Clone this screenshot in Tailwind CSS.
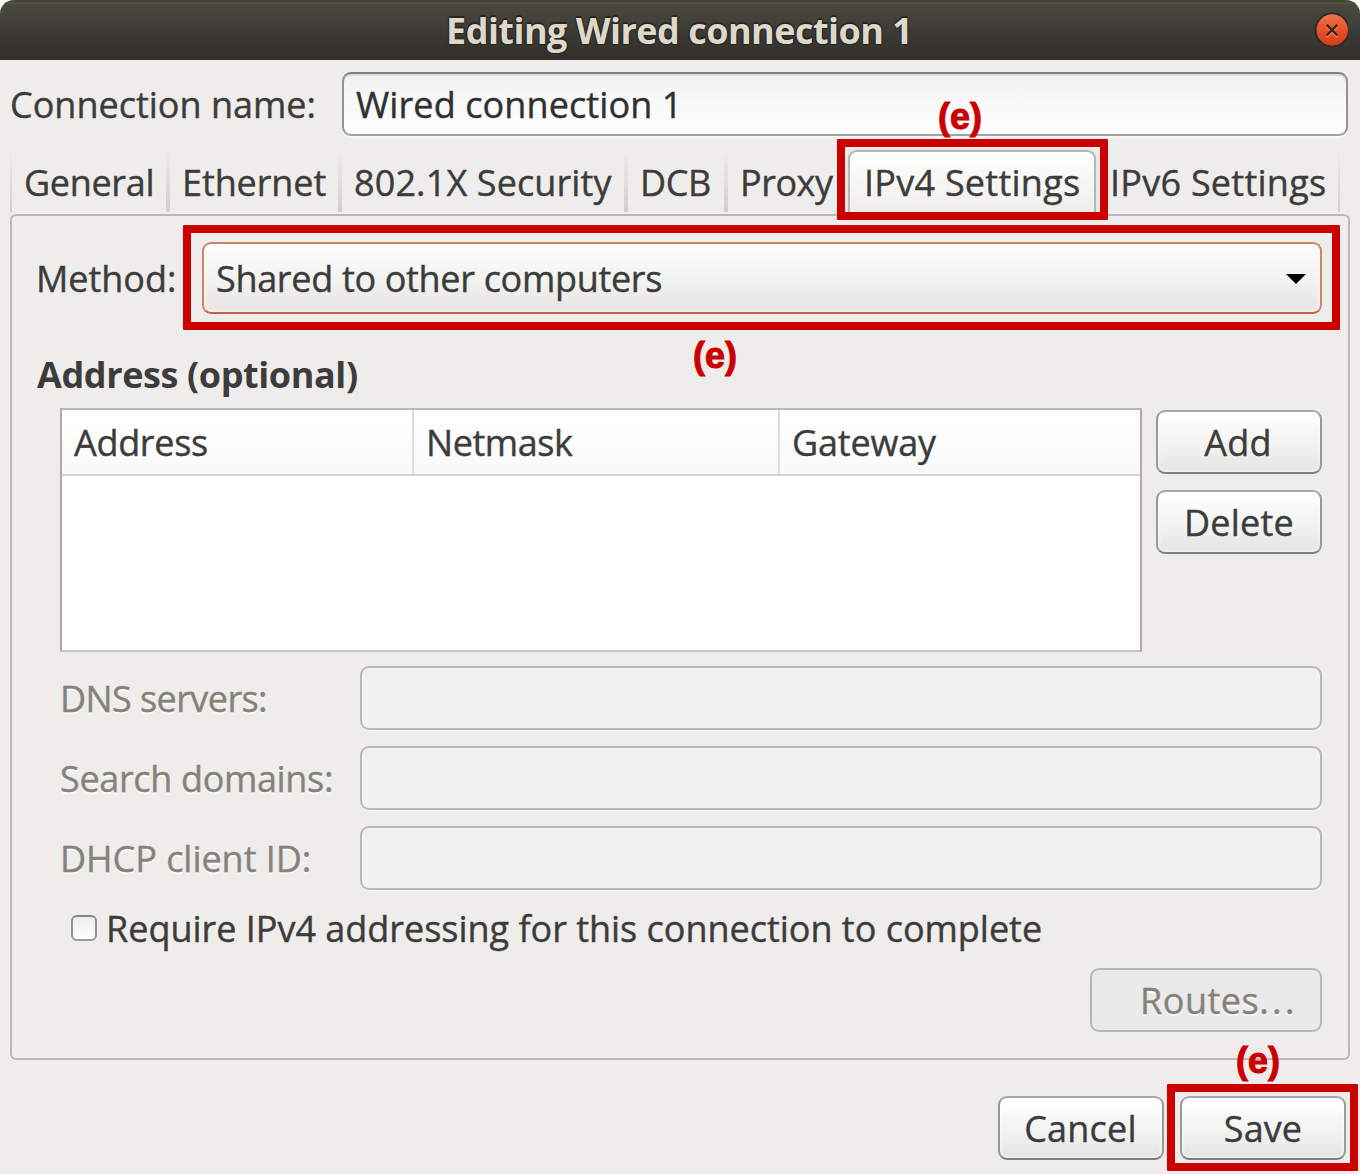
<!DOCTYPE html>
<html lang="en">
<head>
<meta charset="utf-8">
<title>Editing Wired connection 1</title>
<script src="https://cdn.jsdelivr.net/npm/@tailwindcss/browser@4"></script>
</head>
<body class="bg-white">
<div class="relative flex h-[1174px] w-[1360px] flex-col overflow-hidden rounded-t-[14px] bg-[#eeedeb] font-['Open_Sans',sans-serif] text-[36px] leading-[66px] whitespace-nowrap text-[#3c3c3c] [-webkit-text-stroke:0.4px_currentColor]">

  <!-- Title bar -->
  <header class="flex h-[60px] shrink-0 items-center justify-between border-t-2 border-[#454439] bg-linear-to-b from-[#4b4a40] via-[#3c3b36] to-[#302f2b] pr-3 pb-0.5 pl-[446px] shadow-[inset_0_2px_0_#525146]">
    <h1 class="pt-0.5 font-bold leading-[56px] tracking-[-0.52px] text-[#dfd8c9] [-webkit-text-stroke:0] [text-shadow:0_-2px_0_#262623,0_1px_1px_#262623,1px_0_1px_#262623,-1px_0_1px_#262623]">Editing Wired connection 1</h1>
    <button aria-label="Close" class="flex size-9 items-center justify-center">
      <svg class="size-9" viewBox="0 0 36 36">
        <defs><linearGradient id="close" x1="0" y1="0" x2="0" y2="1"><stop offset="0" stop-color="#f0764f"/><stop offset="0.5" stop-color="#e8512b"/><stop offset="1" stop-color="#d83c12"/></linearGradient></defs>
        <circle cx="20" cy="18" r="16.6" fill="url(#close)" stroke="#2a2925" stroke-width="1.8" transform="translate(0.2 0)"/>
        <path d="M14.7 14.7l10.6 10.6M25.3 14.7L14.7 25.3" stroke="#f4764f" stroke-width="2" fill="none"/>
        <path d="M14.7 12.7l10.6 10.6M25.3 12.7L14.7 23.3" stroke="#32280f" stroke-width="2.3" fill="none"/>
      </svg>
    </button>
  </header>

  <!-- Connection name -->
  <div class="mt-3 flex h-16 shrink-0 pr-3 pl-2.5">
    <label class="w-[332px]">Connection name:</label>
    <div class="flex h-16 flex-1 rounded-[9px] border-2 border-x-[#929292] border-t-[#7f7f7f] border-b-[#a1a1a1] bg-linear-to-b from-[#f2f2f2] to-white pl-3 leading-[62px] tracking-[0.1px] text-[#303030] shadow-[0_2px_0_#f7f7f6,inset_0_2px_0_#dcdcdc]">Wired connection 1</div>
  </div>

  <!-- Tabs -->
  <nav class="mt-[14px] flex h-16 shrink-0 pl-2.5">
    <i class="h-[62px] w-0.5 bg-linear-to-b from-transparent to-[#d0cfcd]"></i>
    <div class="w-[154px] pl-3 tracking-[-0.33px]">General</div>
    <i class="h-[62px] w-1 bg-linear-to-b from-transparent to-[#d0cfcd]"></i>
    <div class="w-[168px] pl-3 tracking-[-0.1px]">Ethernet</div>
    <i class="h-[62px] w-1 bg-linear-to-b from-transparent to-[#d0cfcd]"></i>
    <div class="w-[282px] pl-3 tracking-[0.12px]">802.1X Security</div>
    <i class="h-[62px] w-1 bg-linear-to-b from-transparent to-[#d0cfcd]"></i>
    <div class="w-24 pl-3 tracking-[-0.4px]">DCB</div>
    <i class="h-[62px] w-1 bg-linear-to-b from-transparent to-[#d0cfcd]"></i>
    <div class="w-[120px] pl-3 tracking-[-0.47px]">Proxy</div>
    <div class="w-[248px] rounded-t-[9px] border-2 border-b-0 border-[#b9b7b2] bg-linear-to-b from-white to-[#eeedeb] pl-[14px] leading-[62px] tracking-[0.25px] shadow-[0_0_3px_#d8d7d5]">IPv4 Settings</div>
    <div class="w-[242px] pl-[14px] tracking-[0.25px]">IPv6 Settings</div>
    <i class="h-[62px] w-0.5 bg-linear-to-b from-transparent to-[#d0cfcd]"></i>
  </nav>

  <!-- IPv4 page -->
  <main class="mx-2.5 flex h-[846px] shrink-0 flex-col rounded-md border-2 border-[#bab9b4] pr-[26px]">
    <div class="mt-[26px] flex h-[72px] shrink-0 pl-6 leading-[74px]">
      <label class="w-[166px] tracking-[-0.05px]">Method:</label>
      <div class="flex h-[72px] flex-1 justify-between rounded-[9px] border-2 border-[#d0836b] border-b-[#c7623f] bg-linear-to-b from-[#fdfdfd] via-[#f3f3f2] to-[#e6e5e3] pr-[14px] pl-3 leading-[70px] tracking-[-0.32px] shadow-[inset_0_0_4px_#ffffff,0_0_3px_#f7ece8]">
        <span>Shared to other computers</span>
        <svg class="mt-[30px] h-2.5 w-5" viewBox="0 0 20 10"><path d="M0 0h20L10 10z" fill="#000"/></svg>
      </div>
    </div>
    <h2 class="mt-7 h-16 shrink-0 pl-[25px] font-bold tracking-[-0.4px] [-webkit-text-stroke:0]">Address (optional)</h2>

    <div class="mt-0.5 flex h-[244px] shrink-0 pl-12">
      <div class="w-[1082px] border-2 border-x-[#aeaaa7] border-t-[#b9b7b5] border-b-[#c9c5c2] bg-white">
        <div class="flex h-[66px] border-b-2 border-[#d4d1d0] bg-linear-to-b from-white to-[#f9f9f9]">
          <div class="w-[352px] border-r-2 border-[#dddcdb] pl-3 tracking-[-0.32px]">Address</div>
          <div class="w-[366px] border-r-2 border-[#dddcdb] pl-3 tracking-[-0.44px]">Netmask</div>
          <div class="pl-3 tracking-[-0.19px]">Gateway</div>
        </div>
      </div>
      <div class="mt-0.5 ml-[14px] flex flex-1 flex-col gap-4 leading-[58px]">
        <button class="h-16 rounded-[9px] border-2 border-x-[#999] border-t-[#a6a6a6] border-b-[#7f7f7f] bg-linear-to-b from-white via-[#f4f4f3] to-[#e5e4e2] pt-0.5 pr-0.5 tracking-[0.3px] shadow-[inset_0_0_4px_#fff]">Add</button>
        <button class="h-16 rounded-[9px] border-2 border-x-[#999] border-t-[#a6a6a6] border-b-[#7f7f7f] bg-linear-to-b from-white via-[#f4f4f3] to-[#e5e4e2] pt-0.5 tracking-[0.2px] shadow-[inset_0_0_4px_#fff]">Delete</button>
      </div>
    </div>

    <div class="mt-[14px] grid shrink-0 grid-cols-[300px_1fr] gap-y-4 pl-12 text-[#86827a] [text-shadow:0_2px_0_#fafafa]">
      <label class="h-16 tracking-[-0.58px]">DNS servers:</label>
      <div class="h-16 rounded-[9px] border-2 border-[#b9b8b7] bg-[#f1f1f1] shadow-[0_2px_0_#f4f3f2]"></div>
      <label class="h-16 tracking-[-0.34px]">Search domains:</label>
      <div class="h-16 rounded-[9px] border-2 border-[#b9b8b7] bg-[#f1f1f1] shadow-[0_2px_0_#f4f3f2]"></div>
      <label class="h-16 tracking-[-0.04px]">DHCP client ID:</label>
      <div class="h-16 rounded-[9px] border-2 border-[#b9b8b7] bg-[#f1f1f1] shadow-[0_2px_0_#f4f3f2]"></div>
    </div>

    <label class="mt-1.5 flex h-16 shrink-0 items-center pl-[59px]">
      <span class="mr-[9px] size-[26px] rounded-md border-2 border-x-[#929292] border-t-[#858585] border-b-[#9a9a9a] bg-linear-to-b from-[#ededed] to-white"></span>
      <span class="pt-0.5 tracking-[-0.02px]">Require IPv4 addressing for this connection to complete</span>
    </label>

    <button class="mt-2 h-16 w-[232px] shrink-0 self-end rounded-[9px] border-2 border-[#b9b8b7] bg-[#eaeaea] pt-0.5 pl-12 text-left leading-[58px] tracking-[0.5px] text-[#86827a] [text-shadow:0_2px_0_#fafafa]">Routes<span class="tracking-[3.5px]">...</span></button>
  </main>

  <!-- Dialog actions -->
  <footer class="mt-9 flex h-16 shrink-0 justify-end gap-4 pr-[14px] leading-[58px]">
    <button class="w-[166px] rounded-[9px] border-2 border-x-[#999] border-t-[#a6a6a6] border-b-[#7f7f7f] bg-linear-to-b from-white via-[#f4f4f3] to-[#e5e4e2] pt-0.5 pr-px tracking-[0.2px] shadow-[inset_0_0_4px_#fff]">Cancel</button>
    <button class="w-[166px] rounded-[9px] border-2 border-x-[#999] border-t-[#a6a6a6] border-b-[#7f7f7f] bg-linear-to-b from-white via-[#f4f4f3] to-[#e5e4e2] pt-0.5 tracking-[0.09px] shadow-[inset_0_0_4px_#fff]">Save</button>
  </footer>

  <!-- Callout frames and step labels over the dialog -->
  <div class="absolute top-[139px] left-[837px] h-[81px] w-[271px] rounded-[1px] border-8 border-[#cc0000]"></div>
  <div class="absolute top-[225px] left-[183px] h-[105px] w-[1157px] rounded-[1px] border-8 border-[#cc0000]"></div>
  <div class="absolute top-[1084px] left-[1167px] h-[87px] w-[191px] rounded-[1px] border-8 border-[#cc0000]"></div>
  <span class="absolute top-[99px] left-[938px] font-['Liberation_Sans',sans-serif] leading-9 font-bold text-[#cc0000] [-webkit-text-stroke:1px_currentColor]">(e)</span>
  <span class="absolute top-[338px] left-[693px] font-['Liberation_Sans',sans-serif] leading-9 font-bold text-[#cc0000] [-webkit-text-stroke:1px_currentColor]">(e)</span>
  <span class="absolute top-[1043px] left-[1236px] font-['Liberation_Sans',sans-serif] leading-9 font-bold text-[#cc0000] [-webkit-text-stroke:1px_currentColor]">(e)</span>
</div>
</body>
</html>
